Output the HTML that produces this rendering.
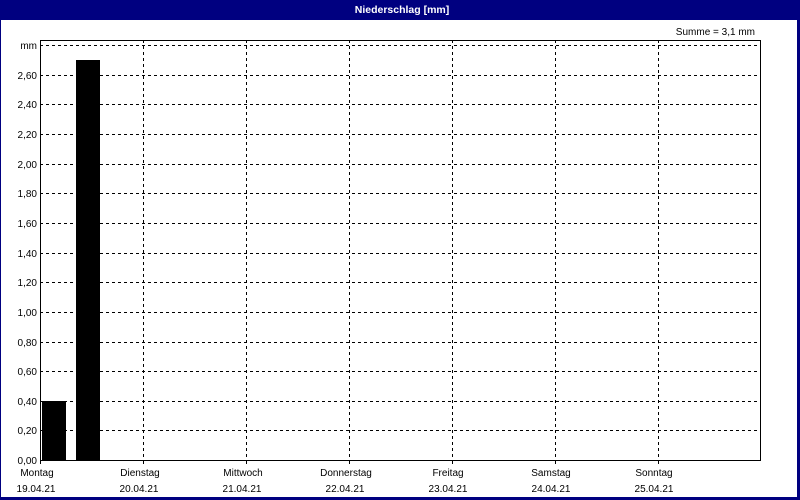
<!DOCTYPE html>
<html><head><meta charset="utf-8"><style>
html,body{margin:0;padding:0;background:#fff}
svg{display:block}
text{font-family:"Liberation Sans",sans-serif;font-size:10px;fill:#000}
</style></head><body>
<svg width="800" height="500" viewBox="0 0 800 500" xmlns="http://www.w3.org/2000/svg">
<rect x="0" y="0" width="800" height="500" fill="#000080"/>
<rect x="1" y="20" width="796" height="477" fill="#fff"/>
<text x="402" y="13" text-anchor="middle" style="font-weight:bold;fill:#fff;font-size:10.5px">Niederschlag [mm]</text>
<text x="755" y="35" text-anchor="end">Summe = 3,1 mm</text>
<g stroke="#000" stroke-width="1" stroke-dasharray="3,3" fill="none" shape-rendering="crispEdges">
<path d="M40 45.5H760M40 75.5H760M40 104.5H760M40 134.5H760M40 164.5H760M40 193.5H760M40 223.5H760M40 253.5H760M40 282.5H760M40 312.5H760M40 342.5H760M40 371.5H760M40 401.5H760M40 430.5H760"/>
<path d="M143.5 40V460M246.5 40V460M349.5 40V460M452.5 40V460M555.5 40V460M658.5 40V460"/>
</g>
<rect x="42" y="401" width="24" height="59" fill="#000"/>
<rect x="76" y="60" width="24" height="400" fill="#000"/>
<g stroke="#000" stroke-width="1" fill="none" shape-rendering="crispEdges">
<rect x="40.5" y="40.5" width="720" height="420"/>
<path d="M40.5 460V464M143.5 460V464M246.5 460V464M349.5 460V464M452.5 460V464M555.5 460V464M658.5 460V464"/>
</g>
<g text-anchor="end">
<text x="37" y="49">mm</text>
<text x="37" y="79">2,60</text>
<text x="37" y="108">2,40</text>
<text x="37" y="138">2,20</text>
<text x="37" y="168">2,00</text>
<text x="37" y="197">1,80</text>
<text x="37" y="227">1,60</text>
<text x="37" y="257">1,40</text>
<text x="37" y="286">1,20</text>
<text x="37" y="316">1,00</text>
<text x="37" y="346">0,80</text>
<text x="37" y="375">0,60</text>
<text x="37" y="405">0,40</text>
<text x="37" y="434">0,20</text>
<text x="37" y="464">0,00</text>
</g>
<g text-anchor="middle">
<text x="37" y="476">Montag</text><text x="36" y="492">19.04.21</text>
<text x="140" y="476">Dienstag</text><text x="139" y="492">20.04.21</text>
<text x="243" y="476">Mittwoch</text><text x="242" y="492">21.04.21</text>
<text x="346" y="476">Donnerstag</text><text x="345" y="492">22.04.21</text>
<text x="448" y="476">Freitag</text><text x="448" y="492">23.04.21</text>
<text x="551" y="476">Samstag</text><text x="551" y="492">24.04.21</text>
<text x="654" y="476">Sonntag</text><text x="654" y="492">25.04.21</text>
</g>
</svg>
</body></html>
